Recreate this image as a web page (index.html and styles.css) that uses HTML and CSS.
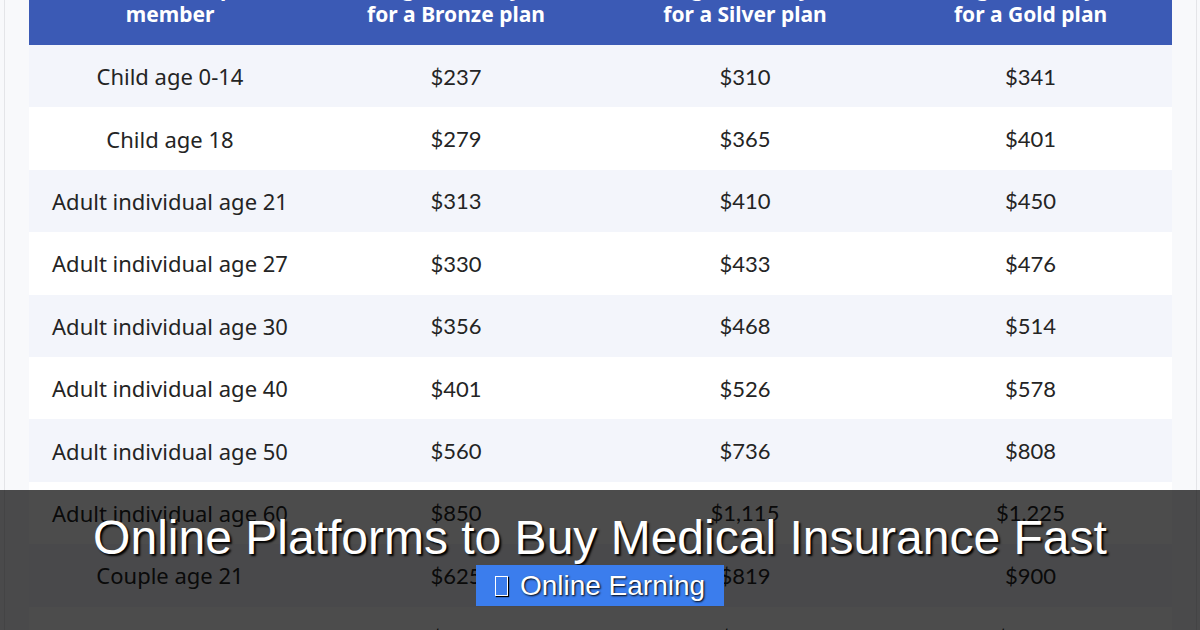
FILE: index.html
```html
<!DOCTYPE html>
<html lang="en">
<head>
<meta charset="utf-8">
<title>Online Platforms to Buy Medical Insurance Fast</title>
<link rel="stylesheet" href="styles.css">
</head>
<body>
<div class="sheet">
  <div class="table">
    <div class="row head">
      <div class="cell">Household or plan<br>member</div>
      <div class="cell">Average monthly cost<br>for a Bronze plan</div>
      <div class="cell">Average monthly cost<br>for a Silver plan</div>
      <div class="cell">Average monthly cost<br>for a Gold plan</div>
    </div>
    <div class="row"><div class="cell label">Child age 0-14</div><div class="cell">$237</div><div class="cell">$310</div><div class="cell">$341</div></div>
    <div class="row"><div class="cell label">Child age 18</div><div class="cell">$279</div><div class="cell">$365</div><div class="cell">$401</div></div>
    <div class="row"><div class="cell label">Adult individual age 21</div><div class="cell">$313</div><div class="cell">$410</div><div class="cell">$450</div></div>
    <div class="row"><div class="cell label">Adult individual age 27</div><div class="cell">$330</div><div class="cell">$433</div><div class="cell">$476</div></div>
    <div class="row"><div class="cell label">Adult individual age 30</div><div class="cell">$356</div><div class="cell">$468</div><div class="cell">$514</div></div>
    <div class="row"><div class="cell label">Adult individual age 40</div><div class="cell">$401</div><div class="cell">$526</div><div class="cell">$578</div></div>
    <div class="row"><div class="cell label">Adult individual age 50</div><div class="cell">$560</div><div class="cell">$736</div><div class="cell">$808</div></div>
    <div class="row"><div class="cell label">Adult individual age 60</div><div class="cell">$850</div><div class="cell">$1,115</div><div class="cell">$1,225</div></div>
    <div class="row"><div class="cell label">Couple age 21</div><div class="cell">$625</div><div class="cell">$819</div><div class="cell">$900</div></div>
    <div class="row"><div class="cell label">Couple age 30</div><div class="cell">$712</div><div class="cell">$936</div><div class="cell">$1,028</div></div>
  </div>
</div>
<div class="overlay">
  <h1 class="title">Online Platforms to Buy Medical Insurance Fast</h1>
  <div class="badge"><span class="tofu"></span>Online Earning</div>
</div>
</body>
</html>
```

FILE: styles.css
```css
html, body {
  margin: 0;
  padding: 0;
  width: 1200px;
  height: 630px;
  overflow: hidden;
  background: #f8f9fb;
}
body {
  position: relative;
  font-family: Lato, "Noto Sans", sans-serif;
}
.sheet {
  margin: 0 3px 0 4px;
  padding: 0 24px;
  border-left: 1px solid #e4e5e8;
  border-right: 1px solid #e4e5e8;
  background: #f8f9fb;
  height: 700px;
}
.table {
  margin-top: -52px;
  display: flex;
  flex-direction: column;
}
.row {
  display: grid;
  grid-template-columns: 282px 290px 288px 283px;
  height: 62.4px;
  align-items: center;
  background: #ffffff;
  color: #242424;
  font-size: 22px;
}
.row:nth-child(even) {
  background: #f3f5fb;
}
.cell {
  text-align: center;
}
.row.head {
  height: 97px;
  background: #3b5ab5;
  color: #ffffff;
  font-family: "Noto Sans", Lato, sans-serif;
  font-weight: 700;
  font-size: 21px;
  line-height: 26px;
  align-items: start;
  padding-top: 27px;
  box-sizing: border-box;
}
.label {
  font-family: "Noto Sans", Lato, sans-serif;
  font-size: 22px;
}
.overlay {
  position: absolute;
  left: 0;
  right: 0;
  bottom: 0;
  height: 140px;
  background: rgba(0, 0, 0, 0.7);
  display: flex;
  flex-direction: column;
  align-items: center;
  padding-top: 21px;
  box-sizing: border-box;
}
.title {
  margin: 0;
  font-family: "Liberation Sans", Arial, sans-serif;
  font-weight: 400;
  font-size: 48px;
  line-height: 54px;
  color: #ffffff;
  text-shadow: 2px 2px 2px #000;
  white-space: nowrap;
}
.badge {
  margin-top: 0;
  height: 41px;
  width: 248px;
  box-sizing: border-box;
  background: #3b7ded;
  color: #ffffff;
  font-family: "Liberation Sans", Arial, sans-serif;
  font-size: 28px;
  display: flex;
  align-items: center;
  justify-content: center;
  gap: 12px;
  text-shadow: 1px 1px 2px #000;
}
.tofu {
  display: inline-block;
  width: 11px;
  height: 18px;
  border: 1.5px solid #ffffff;
  box-shadow: 1px 1px 1px #000;
}
```
